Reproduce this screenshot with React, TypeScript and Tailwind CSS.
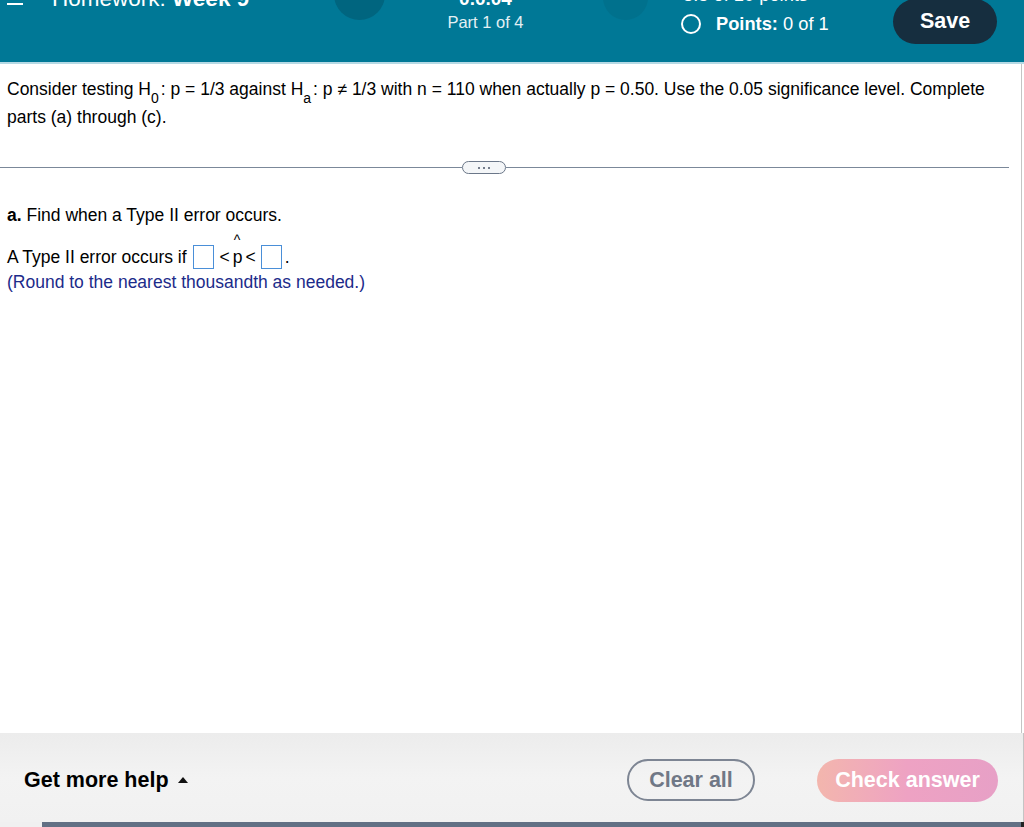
import React from "react";

const font = { fontFamily: '"Liberation Sans", Arial, sans-serif' };

function Box() {
  return <span className="inline-block w-[21px] h-[24px] border border-[#4a8fd8] bg-white shrink-0" />;
}

export default function App() {
  return (
    <div className="w-[1024px] h-[827px] flex flex-col bg-white overflow-hidden" style={font}>
      {/* Header */}
      <div className="h-[64px] shrink-0 bg-[#007896] border-b-2 border-[#b5d9e4] overflow-hidden">
        <div className="flex items-start h-[62px]">
          {/* left */}
          <div className="w-[334px] shrink-0 flex items-start pl-[7px]">
            <div className="flex flex-col gap-[5px] -mt-[11px]">
              <span className="block w-[16px] h-[2px] bg-white" />
              <span className="block w-[16px] h-[2px] bg-white" />
              <span className="block w-[16px] h-[2px] bg-white" />
            </div>
            <div className="ml-[29px] -mt-[14px] text-white text-[22.5px] leading-[26px] whitespace-nowrap">
              Homework: <span className="font-bold">Week 9</span>
            </div>
          </div>
          <div className="w-[51px] h-[51px] rounded-full bg-[#00657f] shrink-0 -mt-[31px]" />
          {/* center */}
          <div className="w-[201px] shrink-0 flex flex-col items-center -mt-[12px]">
            <span className="text-white font-bold text-[19px] leading-[22px] whitespace-nowrap">0.0.04</span>
            <span className="text-[#e3f0f4] text-[16.5px] leading-[20px] mt-[2px] whitespace-nowrap">Part 1 of 4</span>
          </div>
          <div className="ml-[17px] w-[45px] h-[45px] rounded-full bg-[#00718d] shrink-0 -mt-[25px]" />
          {/* right */}
          <div className="ml-[33px] w-[212px] shrink-0 flex flex-col -mt-[15px]">
            <span className="text-white text-[18.3px] leading-[20px] pl-[2px] whitespace-nowrap">8.5 of 10 points</span>
            <div className="flex items-center mt-[8px]">
              <span className="w-[20px] h-[20px] rounded-full border-2 border-white shrink-0" />
              <span className="ml-[15px] text-white text-[18.3px] leading-[22px] whitespace-nowrap"><span className="font-bold">Points:</span> 0 of 1</span>
            </div>
          </div>
          <div className="-mt-[1px] w-[104px] h-[45px] rounded-full bg-[#162e3f] flex items-center justify-center text-white font-bold text-[21.5px] shrink-0">
            Save
          </div>
        </div>
      </div>

      {/* Main */}
      <div className="flex-1 flex">
        <div className="flex-1 border-r border-[#c4c4c4] flex flex-col">
          <div className="px-[7px] pt-[11px] text-[17.5px] leading-[28px] text-black">
            <p>
              Consider testing H<sub className="text-[14px] align-[-4px] leading-none mr-[2px]">0</sub>: p = 1/3 against H<sub className="text-[14px] align-[-4px] leading-none mr-[2px]">a</sub>: p ≠ 1/3 with n = 110 when actually p = 0.50. Use the 0.05 significance level. Complete parts (a) through (c).
            </p>
          </div>
          <div className="mt-[30px] flex items-center pr-[12px]">
            <div className="w-[462px] h-px bg-[#7b8899]" />
            <div className="w-[44px] h-[13px] rounded-full border-[1.5px] border-[#6b7789] bg-[#f4f6f8] flex items-center justify-center gap-[3px]">
              <span className="w-[2px] h-[2px] rounded-full bg-[#4a5568]" />
              <span className="w-[2px] h-[2px] rounded-full bg-[#4a5568]" />
              <span className="w-[2px] h-[2px] rounded-full bg-[#4a5568]" />
            </div>
            <div className="flex-1 h-px bg-[#7b8899]" />
          </div>
          <div className="px-[7px] mt-[30px] text-[17.5px] text-black">
            <p className="leading-[22px]"><span className="font-bold">a.</span> Find when a Type II error occurs.</p>
            <div className="mt-[18px] h-[26px] flex items-center">
              <span className="whitespace-nowrap">A Type II error occurs if</span>
              <span className="ml-[6px] flex"><Box /></span>
              <span className="ml-[6px]">&lt;</span>
              <span className="relative ml-[3px]">p<span className="absolute left-[1px] -top-[14px] text-[14px]">^</span></span>
              <span className="ml-[3px]">&lt;</span>
              <span className="ml-[5px] flex"><Box /></span>
              <span className="ml-[3px]">.</span>
            </div>
            <p className="leading-[24px] text-[#1c2b8a]">(Round to the nearest thousandth as needed.)</p>
          </div>
        </div>
        <div className="w-[2px]" />
      </div>

      {/* Footer */}
      <div className="h-[89px] shrink-0 bg-gradient-to-b from-[#ececec] via-[#f3f3f3] to-[#f1f1f1] flex items-center pt-[5px] pr-[25px] pl-[24px] border-r border-[#c4c4c4]">
        <div className="flex items-center gap-[9px] text-[21.5px] font-bold text-black">
          Get more help
          <svg width="10" height="6" viewBox="0 0 10 6"><path d="M0 6 L5 0 L10 6 Z" fill="#111" /></svg>
        </div>
        <div className="flex-1" />
        <div className="w-[128px] h-[42px] rounded-full border-2 border-[#7d8593] flex items-center justify-center text-[21.5px] font-bold text-[#707886]">
          Clear all
        </div>
        <div className="ml-[62px] w-[181px] h-[43px] rounded-full bg-gradient-to-r from-[#f3b6ad] via-[#eea2c3] to-[#e7a0c6] flex items-center justify-center text-[21.5px] font-bold text-white">
          Check answer
        </div>
      </div>
      <div className="h-[5px] shrink-0 flex">
        <div className="w-[42px] bg-[#f0f0f0]" />
        <div className="flex-1 bg-[#627084]" />
        <div className="w-[3px] bg-[#222]" />
      </div>
    </div>
  );
}
